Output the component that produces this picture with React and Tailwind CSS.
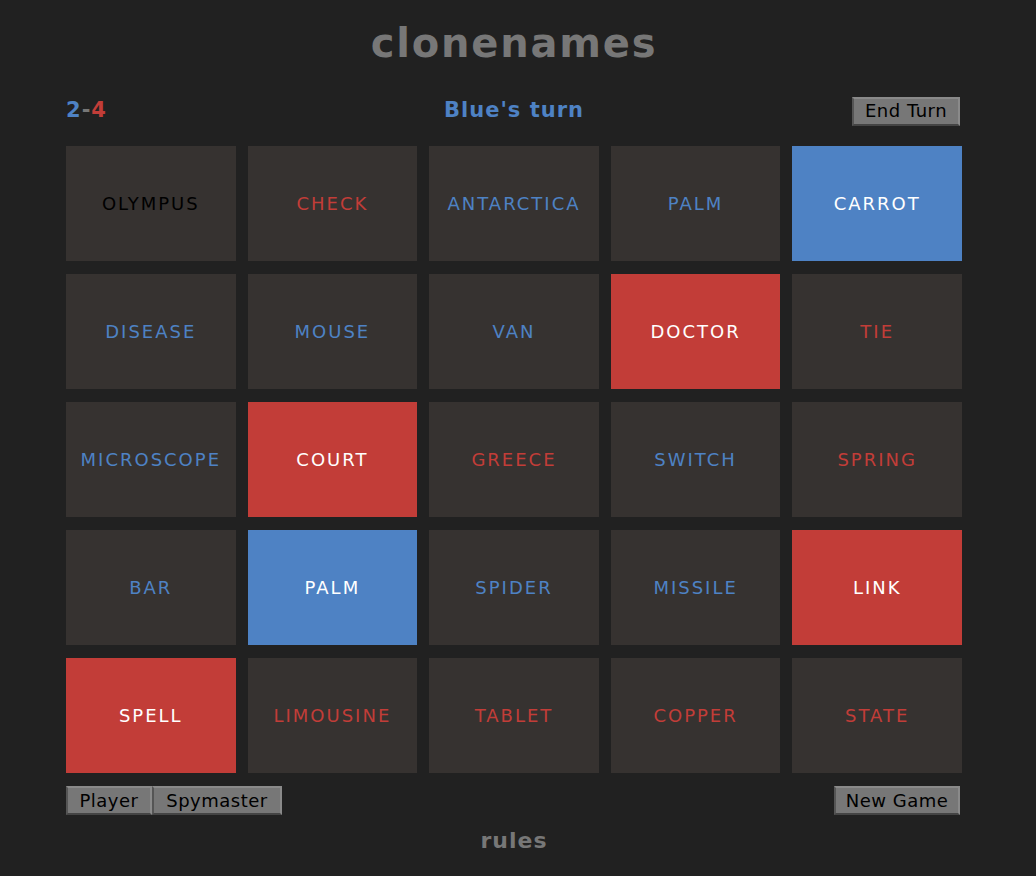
const cards = [
  ['OLYMPUS', 'black', false], ['CHECK', 'red', false], ['ANTARCTICA', 'blue', false], ['PALM', 'blue', false], ['CARROT', 'blue', true],
  ['DISEASE', 'blue', false], ['MOUSE', 'blue', false], ['VAN', 'blue', false], ['DOCTOR', 'red', true], ['TIE', 'red', false],
  ['MICROSCOPE', 'blue', false], ['COURT', 'red', true], ['GREECE', 'red', false], ['SWITCH', 'blue', false], ['SPRING', 'red', false],
  ['BAR', 'blue', false], ['PALM', 'blue', true], ['SPIDER', 'blue', false], ['MISSILE', 'blue', false], ['LINK', 'red', true],
  ['SPELL', 'red', true], ['LIMOUSINE', 'red', false], ['TABLET', 'red', false], ['COPPER', 'red', false], ['STATE', 'red', false],
]

function cardClass(team, revealed) {
  if (revealed && team === 'blue') return 'bg-[#4e82c4] text-white'
  if (revealed && team === 'red') return 'bg-[#c23d38] text-white'
  if (team === 'blue') return 'bg-[#363230] text-[#4e82c4]'
  if (team === 'red') return 'bg-[#363230] text-[#c23d38]'
  return 'bg-[#363230] text-black'
}

function Btn({ children, className = '' }) {
  return (
    <button className={`bg-[#777777] text-black text-[18px] tracking-[0.5px] leading-none h-[29px] border-2 border-t-[#8a8a8a] border-r-[#8a8a8a] border-l-[#555] border-b-[#444] ${className}`}>
      {children}
    </button>
  )
}

export default function App() {
  return (
    <div className="min-h-[876px] bg-[#212121] font-['DejaVu_Sans',sans-serif]">
      <div className="w-[896px] ml-[66px] pt-[20px]">
        <h1 className="text-center text-[40px] leading-[46px] font-bold text-[#777777] tracking-[1.8px]">clonenames</h1>
        <div className="flex items-center justify-between mt-[30px] h-[30px]">
          <div className="text-[21px] font-bold w-[120px] tracking-[1px]">
            <span className="text-[#4e82c4]">2</span>
            <span className="text-[#777]">-</span>
            <span className="text-[#c23d38]">4</span>
          </div>
          <div className="text-[21px] text-[#4e82c4] tracking-[1px] font-bold">Blue's turn</div>
          <div className="w-[120px] flex justify-end pr-[2px]">
            <Btn className="w-[108px]">End Turn</Btn>
          </div>
        </div>
        <div className="grid grid-cols-5 gap-x-[12px] gap-y-[13px] mt-[20px]">
          {cards.map(([word, team, revealed], i) => (
            <div
              key={i}
              className={`h-[115px] flex items-center justify-center text-[18px] tracking-[2px] ${cardClass(team, revealed)}`}
            >
              {word}
            </div>
          ))}
        </div>
        <div className="flex justify-between mt-[13px]">
          <div className="flex">
            <Btn className="w-[86px]">Player</Btn>
            <Btn className="w-[130px]">Spymaster</Btn>
          </div>
          <Btn className="w-[126px] mr-[2px]">New Game</Btn>
        </div>
        <div className="text-center text-[22px] font-bold tracking-[1px] text-[#777] mt-[9px]">rules</div>
      </div>
    </div>
  )
}
